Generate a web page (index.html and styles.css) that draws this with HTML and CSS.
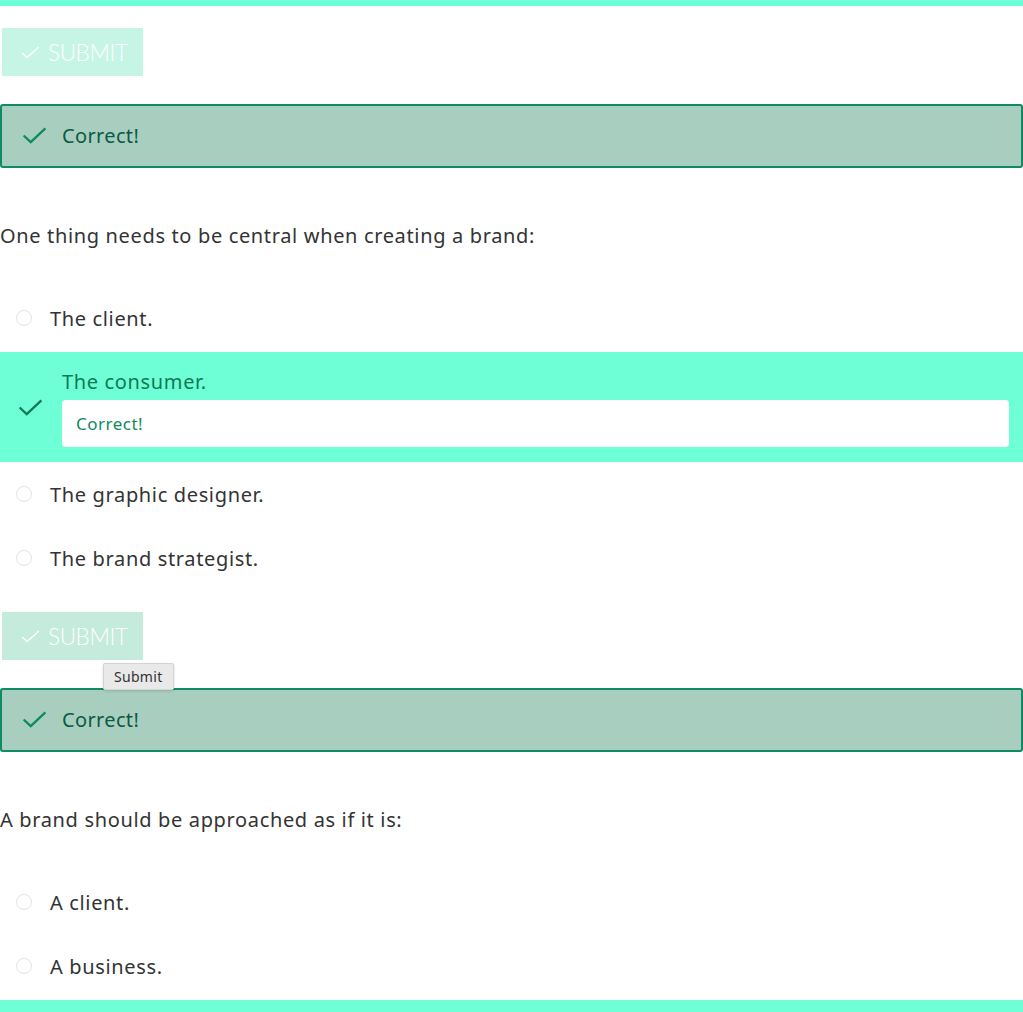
FILE: index.html
```html
<!DOCTYPE html>
<html>
<head>
<meta charset="utf-8">
<link rel="stylesheet" href="styles.css">
</head>
<body>
<div class="bar"></div>
<div class="page">
  <button class="submit"><svg class="sicon" viewBox="0 0 20 14" width="19" height="13"><path d="M1 7.5 L6.5 12.5 L19 1" fill="none" stroke="#fff" stroke-width="1.6"/></svg><span>SUBMIT</span></button>
  <div class="result"><svg class="ricon" viewBox="0 0 26 18" width="25" height="17"><path d="M1.5 9 L9 16 L24.5 1.5" fill="none" stroke="#0f8a5f" stroke-width="2.4"/></svg><span>Correct!</span></div>

  <p class="question">One thing needs to be central when creating a brand:</p>
  <div class="options">
    <div class="option"><span class="radio"></span><span>The client.</span></div>
    <div class="option selected">
      <svg class="ricon" viewBox="0 0 26 18" width="25" height="17"><path d="M1.5 9 L9 16 L24.5 1.5" fill="none" stroke="#0f7a55" stroke-width="2.4"/></svg>
      <div class="selbody">
        <div class="seltext">The consumer.</div>
        <div class="feedback">Correct!</div>
      </div>
    </div>
    <div class="option"><span class="radio"></span><span>The graphic designer.</span></div>
    <div class="option"><span class="radio"></span><span>The brand strategist.</span></div>
  </div>

  <div class="submitwrap">
    <button class="submit second"><svg class="sicon" viewBox="0 0 20 14" width="19" height="13"><path d="M1 7.5 L6.5 12.5 L19 1" fill="none" stroke="#fff" stroke-width="1.6"/></svg><span>SUBMIT</span></button>
    <div class="tooltip">Submit</div>
  </div>
  <div class="result"><svg class="ricon" viewBox="0 0 26 18" width="25" height="17"><path d="M1.5 9 L9 16 L24.5 1.5" fill="none" stroke="#0f8a5f" stroke-width="2.4"/></svg><span>Correct!</span></div>

  <p class="question">A brand should be approached as if it is:</p>
  <div class="options">
    <div class="option"><span class="radio"></span><span>A client.</span></div>
    <div class="option"><span class="radio"></span><span>A business.</span></div>
  </div>
</div>
<div class="bar bottom"></div>
</body>
</html>
```

FILE: styles.css
```css
html, body {
  margin: 0;
  padding: 0;
  background: #fff;
  overflow: hidden;
}
body {
  font-family: "Noto Sans", "Open Sans", sans-serif;
  color: #333;
  height: 1012px;
  position: relative;
}
.bar {
  height: 6px;
  background: #6effd6;
}
.bar.bottom {
  position: absolute;
  left: 0;
  right: 0;
  top: 1000px;
  height: 12px;
}
.page {
  padding-top: 22px;
}
.submit {
  display: flex;
  align-items: center;
  gap: 8px;
  margin: 0 0 0 2px;
  width: 141px;
  height: 48px;
  padding: 0 0 0 19px;
  border: 0;
  background: #c7f5e5;
  color: #fff;
  font-family: "Lato", sans-serif;
  font-weight: 300;
  font-size: 22.5px;
  letter-spacing: -0.4px;
}
.submit.second {
  background: #c4ebdb;
}
.sicon {
  display: block;
  margin-top: 1px;
}
.result {
  margin-top: 28px;
  border: 2px solid #0f8a64;
  border-radius: 3px;
  background: #a8cec0;
  display: flex;
  align-items: center;
  padding-left: 20px;
  padding-bottom: 2px;
  box-sizing: content-box;
  height: 58px;
  gap: 15px;
  color: #0c5a43;
  font-size: 20px;
  letter-spacing: 0.35px;
}
.ricon { display: block; flex: none; }
.question {
  margin: 54px 0 36px 0;
  font-size: 20px;
  line-height: 28px;
  letter-spacing: 0.65px;
  color: #333;
}
.options {
  display: flex;
  flex-direction: column;
}
.option {
  height: 64px;
  display: flex;
  align-items: center;
  font-size: 20px;
  letter-spacing: 0.65px;
  color: #333;
}
.radio {
  width: 16px;
  height: 16px;
  border: 1px solid #e3e3e3;
  border-radius: 50%;
  margin: 0 18px 0 16px;
  box-sizing: border-box;
  background: #fff;
  flex: none;
}
.option.selected {
  height: auto;
  margin-top: 2px;
  background: #6effd6;
  padding: 16px 14px 15px 18px;
  gap: 19px;
}
.selbody { flex: 1; }
.seltext {
  color: #0f7a55;
  line-height: 28px;
  font-size: 20px;
}
.feedback {
  margin-top: 4px;
  background: #fff;
  border-radius: 4px;
  height: 47px;
  display: flex;
  align-items: center;
  padding-left: 14px;
  font-size: 17px;
  letter-spacing: 0.5px;
  color: #0f8a5f;
}
.submitwrap {
  margin-top: 22px;
  position: relative;
}
.tooltip {
  position: absolute;
  left: 103px;
  top: 51px;
  height: 25px;
  padding: 0 10px;
  display: flex;
  align-items: center;
  background: #e9e9e9;
  border: 1px solid #d4d4d4;
  border-radius: 2px;
  box-shadow: 0 1px 3px rgba(0,0,0,0.15);
  font-size: 14px;
  letter-spacing: 0.3px;
  color: #333;
  z-index: 2;
}
```
